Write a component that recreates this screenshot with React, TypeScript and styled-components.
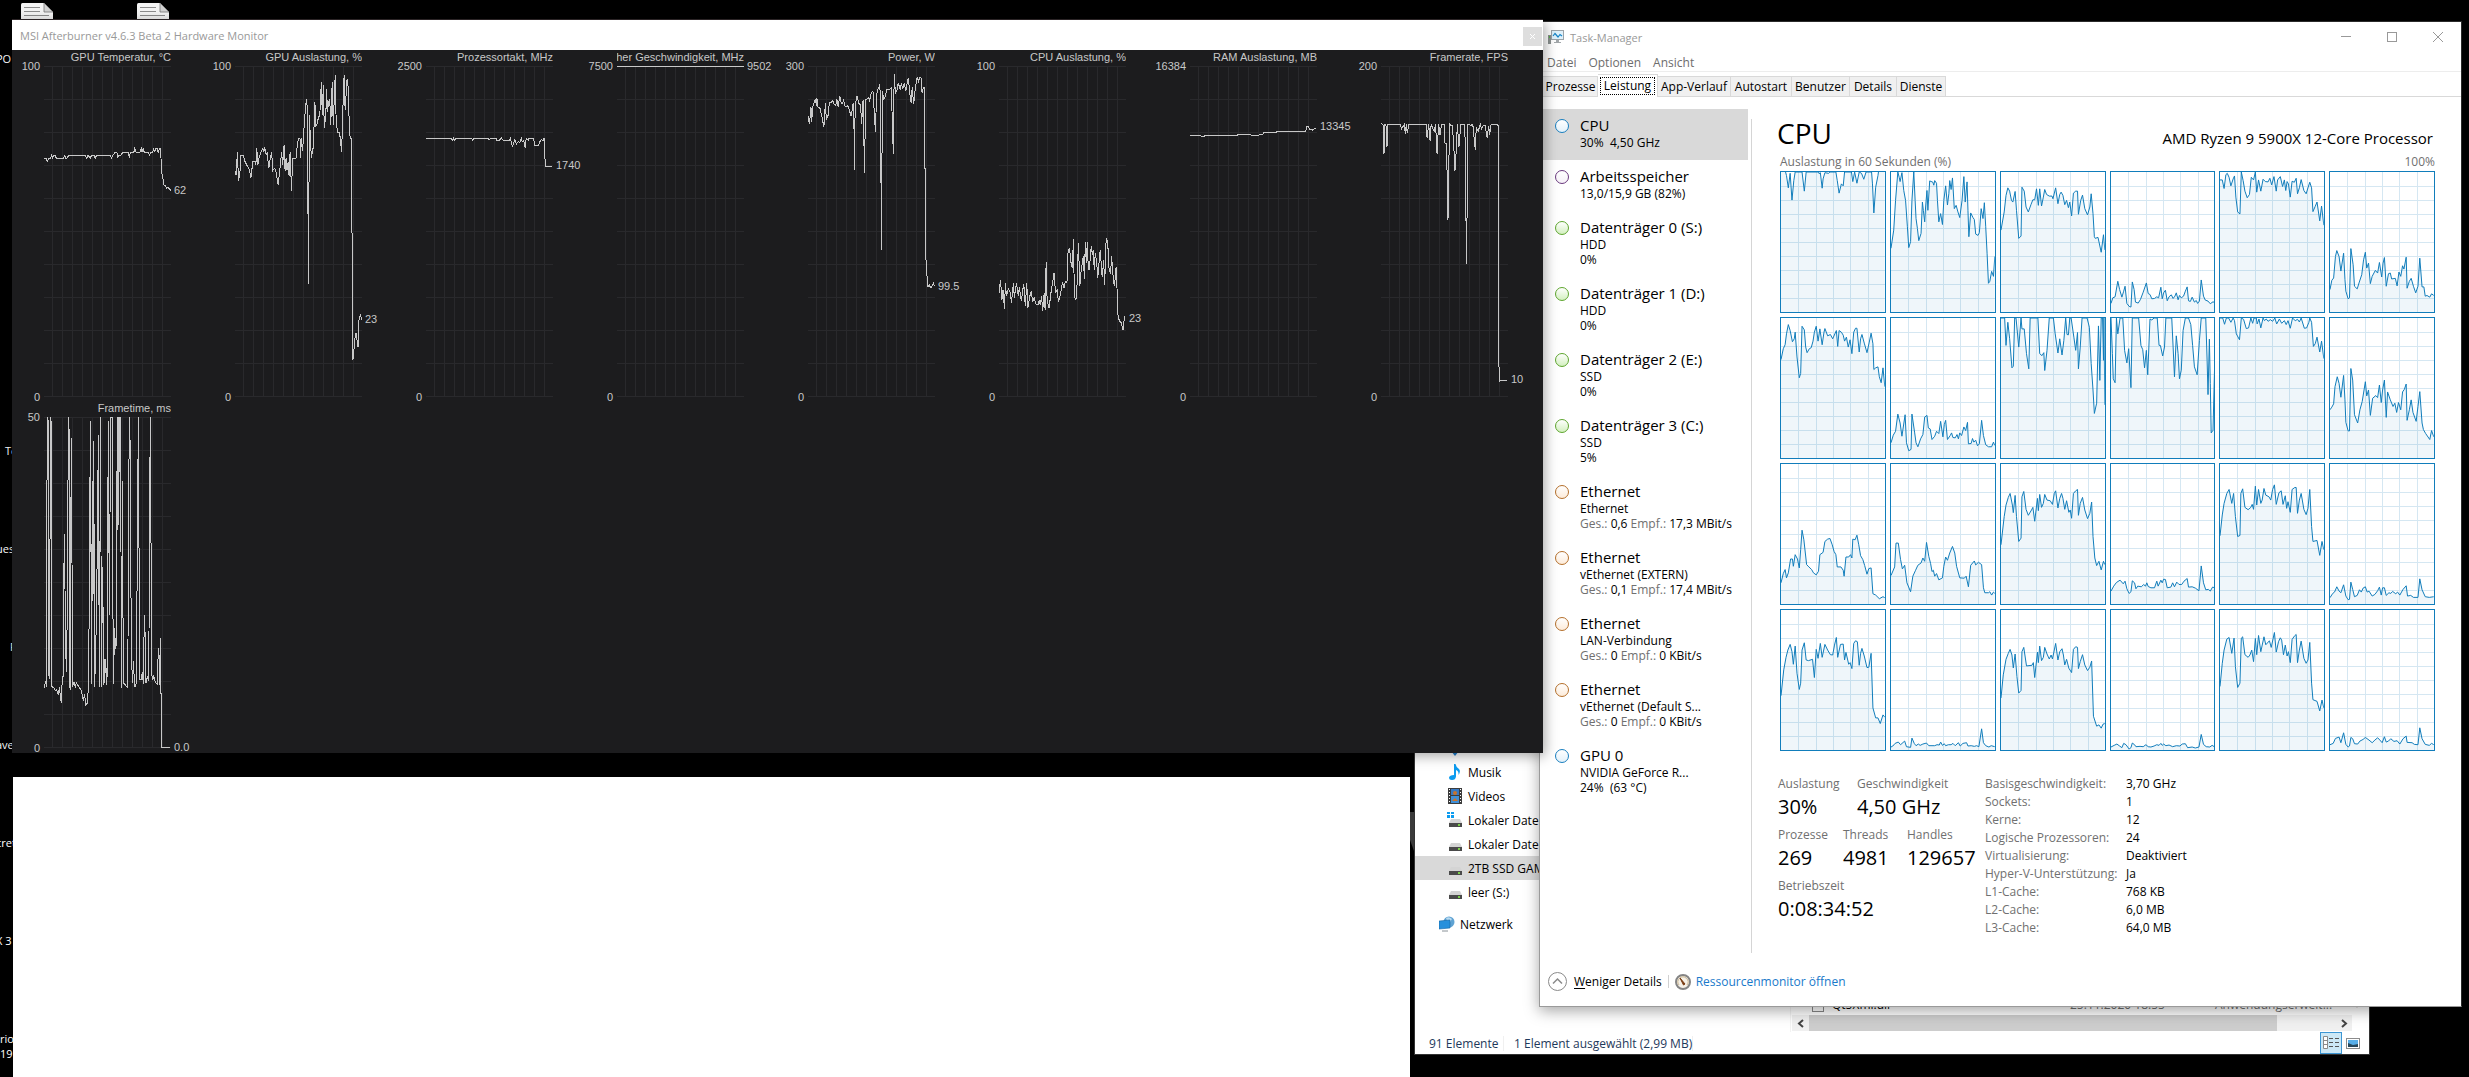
import React from "react";
import styled, { createGlobalStyle, css } from "styled-components";

const uiFont = `"Open Sans", "Noto Sans", sans-serif`;
const monitorFont = `"Liberation Sans", Arial, sans-serif`;

const GlobalStyle = createGlobalStyle`
  *, *::before, *::after { box-sizing: border-box; }
  html, body { margin: 0; background: #000; }
  body { font-family: ${uiFont}; font-size: 12px; line-height: 15px; color: #000; }
  button { font: inherit; color: inherit; border: 0; padding: 0; margin: 0; background: none; text-align: left; }
  svg { display: block; flex: none; }
`;

const Desktop = styled.main`
  position: relative;
  width: 100%;
  height: 100vh;
  overflow: hidden;
  background: #000;
`;

const DesktopIcon = styled.div<{ $left: number }>`
  position: absolute;
  top: 3px;
  left: ${(p) => p.$left}px;
`;

const DesktopLabel = styled.span<{ $top: number; $left?: number }>`
  position: absolute;
  top: ${(p) => p.$top}px;
  left: ${(p) => p.$left ?? 0}px;
  font-size: 11px;
  white-space: nowrap;
  color: #fff;
`;

const WallpaperShard = styled.svg`
  position: absolute;
  left: 1410px;
  top: 812px;
`;

/* ---------- hardware monitor ---------- */

const MonitorWindow = styled.section`
  position: absolute;
  z-index: 3;
  left: 12px;
  right: 926px;
  top: 19px;
  border-top: 1px solid #2b2426;
  background: #1c1c1e;
  box-shadow: 2px 3px 12px rgba(0, 0, 0, 0.35);
`;

const MonitorTitle = styled.header`
  display: flex;
  align-items: center;
  justify-content: space-between;
  height: 30px;
  padding: 0 1px 0 8px;
  background: #fff;
  font-size: 11px;
  color: #999;
`;

const MonitorClose = styled.button`
  display: flex;
  align-items: center;
  justify-content: center;
  width: 19px;
  height: 19px;
  margin-top: 3px;
  background: #dedede;
`;

const MonitorGrid = styled.div`
  display: grid;
  grid-template-columns: repeat(8, 1fr);
  padding: 0 3px 1px 0;
  font-family: ${monitorFont};
  font-size: 11px;
  line-height: 12px;
  color: #c8c8c8;
`;

const MonitorCell = styled.article`
  display: grid;
  grid-template-columns: 32px 1fr 32px;
  grid-template-rows: 16px 331px 4px;
`;

const MonitorName = styled.h3`
  grid-column: 2;
  display: flex;
  justify-content: flex-end;
  margin: 0;
  padding-top: 1px;
  overflow: hidden;
  white-space: nowrap;
  font: inherit;
`;

const Scale = styled.div`
  grid-column: 1;
  grid-row: 2;
  display: flex;
  flex-direction: column;
  justify-content: space-between;
  align-items: flex-end;
  margin: -6px 0;
  padding-right: 4px;
`;

const Plot = styled.div`
  grid-column: 2;
  grid-row: 2;
  background:
    linear-gradient(#29292c 1px, transparent 1px) 0 0 / 100% 33px,
    linear-gradient(90deg, #29292c 1px, transparent 1px) 8px 0 / 10px 100%;
  svg { overflow: visible; }
`;

const Reading = styled.output`
  grid-column: 3;
  grid-row: 2;
  margin-top: -6px;
  padding-left: 3px;
`;

type Series = { name: string; max: string; value: string; at: number; box: string; points: string };

const series: Series[] = [
  { name: "GPU Temperatur, °C", max: "100", value: "62", at: 124, box: "88 199 256 990",
    points: "88,476 92,476 95,485 98,476 101,476 103,467 105,475 107,467 110,467 113,476 127,476 130,467 132,475 134,475 138,467 171,467 174,476 177,467 181,476 184,467 189,467 191,476 194,467 221,467 224,475 227,467 231,458 235,458 236,475 238,467 243,467 247,458 258,458 260,475 262,458 269,458 271,446 274,458 281,458 284,446 286,458 288,446 290,458 298,458 301,467 303,458 307,458 309,446 311,458 313,446 316,446 318,458 321,446 323,446 325,515 328,540 330,556 332,557 335,566 338,564 340,567 344,572" },
  { name: "GPU Auslastung, %", max: "100", value: "23", at: 253, box: "472 199 256 990",
    points: "472,513 474,527 477,457 479,545 482,518 484,467 489,467 492,485 497,500 501,510 504,536 508,485 513,485 514,495 516,446 518,495 520,478 524,458 528,446 530,455 532,446 535,465 537,458 540,506 543,476 546,458 548,513 552,506 555,518 559,556 562,516 566,458 568,497 571,436 573,515 575,476 577,512 579,488 581,528 583,458 586,575 588,476 595,476 597,446 600,415 603,415 604,476 606,415 608,455 610,415 612,360 616,298 618,330 619,600 620,854 621,600 622,346 624,420 626,475 630,440 633,307 635,378 637,375 640,355 643,345 646,247 648,346 650,256 652,385 655,345 657,267 658,337 661,306 663,298 665,377 668,247 670,377 674,226 676,372 679,398 683,400 685,430 687,458 689,345 692,226 694,330 698,237 700,260 703,405 705,415 707,415 708,750 709,1082 711,1070 713,1020 716,1000 718,1022 720,1043 722,960 725,943 727,960" },
  { name: "Prozessortakt, MHz", max: "2500", value: "1740", at: 99, box: "856 199 256 990",
    points: "856,415 907,415 909,422 911,415 913,422 917,415 948,415 950,422 952,415 981,415 983,422 986,415 997,415 999,422 1004,422 1008,415 1012,422 1024,422 1026,415 1030,440 1033,430 1035,420 1038,433 1042,425 1045,428 1048,415 1050,427 1053,422 1056,445 1058,415 1062,422 1064,415 1070,415 1073,415 1075,438 1082,439 1086,425 1089,420 1092,422 1094,415 1095,458 1097,499 1110,499" },
  { name: "Speicher Geschwindigkeit, MHz", max: "7500", value: "9502", at: 0, box: "1240 199 256 990",
    points: "1240,200 1495,200" },
  { name: "Power, W", max: "300", value: "99.5", at: 220, box: "56 199 256 990",
    points: "56,350 59,374 62,323 63,368 66,320 71,298 73,320 74,295 76,322 80,325 84,350 88,383 91,310 93,360 97,345 99,308 102,310 106,302 108,312 112,318 114,298 117,322 120,288 123,310 126,310 128,302 131,322 136,318 139,330 143,350 147,310 149,400 150,510 151,310 154,300 155,288 158,310 162,316 164,374 167,300 170,521 172,300 178,295 180,303 184,278 187,275 188,300 192,398 194,290 196,272 200,258 202,280 203,510 204,752 205,510 206,275 209,300 212,288 215,270 222,268 224,262 226,370 228,462 229,300 230,222 232,280 235,275 238,250 242,270 244,250 247,268 250,250 253,275 258,235 262,290 264,311 266,262 269,314 272,270 276,232 279,245 282,232 284,235 286,280 289,262 290,262 291,505 293,505 293,758 296,830 298,862 300,855 304,866 309,850 311,860" },
  { name: "CPU Auslastung, %", max: "100", value: "23", at: 252, box: "440 199 256 990",
    points: "440,880 443,840 446,900 448,870 451,928 453,850 455,890 459,867 463,880 465,911 469,850 471,895 475,850 479,890 481,863 485,905 488,870 490,853 493,920 496,850 498,925 502,890 505,875 508,907 511,895 515,915 519,915 521,900 523,917 526,890 528,935 531,880 533,930 535,788 537,900 541,926 543,900 546,865 548,850 551,820 554,880 557,870 560,907 563,890 568,848 571,865 574,845 577,850 579,760 582,745 586,800 588,802 590,717 592,890 595,902 597,870 600,730 603,860 605,820 610,768 612,838 614,727 616,790 618,727 620,808 622,808 626,738 628,765 630,750 632,810 634,760 637,788 639,835 641,800 644,750 648,832 651,782 653,855 656,717 659,725 662,812 665,820 667,770 671,850 673,858 676,802 679,905 680,950 683,965 686,968 690,990 693,950" },
  { name: "RAM Auslastung, MB", max: "16384", value: "13345", at: 60, box: "824 199 256 990",
    points: "824,406 843,406 846,409 853,409 856,406 920,406 923,403 944,403 947,406 963,406 965,403 971,403 974,397 998,397 1000,394 1018,394 1020,397 1022,394 1057,394 1060,380 1062,379 1065,389 1068,388 1071,391 1077,385" },
  { name: "Framerate, FPS", max: "200", value: "10", at: 313, box: "1208 199 256 990",
    points: "1208,371 1212,374 1214,463 1216,374 1218,374 1220,443 1222,373 1247,373 1249,388 1255,375 1257,404 1259,373 1261,401 1264,373 1299,373 1301,416 1304,373 1307,425 1309,373 1312,385 1315,395 1318,373 1321,463 1324,373 1327,405 1330,373 1335,373 1337,430 1340,430 1342,580 1343,662 1344,580 1346,373 1350,378 1352,378 1355,448 1357,515 1359,470 1362,373 1365,443 1369,373 1377,373 1379,595 1380,792 1382,595 1383,375 1390,377 1393,373 1398,450 1400,385 1404,395 1408,373 1411,388 1414,377 1418,378 1422,416 1425,378 1427,406 1429,378 1432,373 1442,373 1444,378 1445,765 1446,1148 1446,1141 1461,1141" },
  { name: "Frametime, ms", max: "50", value: "0.0", at: 330, box: "132 63 381 753",
    points: "132,682 137,665 139,680 140,370 142,63 144,63 146,355 146,655 148,362 149,660 151,63 153,63 155,370 155,678 163,682 166,688 170,685 175,697 178,680 184,716 187,655 190,655 191,470 193,330 195,455 197,600 200,645 203,370 205,63 207,63 208,680 211,683 212,397 214,110 216,395 218,678 222,668 226,680 229,670 238,680 244,688 250,710 254,695 257,720 263,715 266,655 269,345 271,72 273,372 274,672 277,210 279,483 280,117 283,397 284,678 287,600 290,485 293,275 295,105 296,392 299,678 301,63 303,370 305,678 307,405 310,540 312,675 313,615 315,648 317,615 320,675 322,640 323,340 325,73 328,515 330,288 332,63 337,63 338,366 340,672 343,545 344,605 347,567 349,585 350,322 352,63 354,320 356,63 358,188 359,63 361,63 363,372 365,682 367,208 368,442 371,670 382,680 384,575 386,267 388,63 391,140 392,397 395,625 398,670 400,620 404,680 409,670 412,363 415,63 417,363 419,662 424,662 427,645 430,672 431,593 434,515 436,587 438,670 442,655 445,665 447,557 449,258 451,63 453,350 455,648 458,663 461,655 467,670 472,672 473,630 476,590 478,620 479,675 481,568 482,693 484,693 485,816 510,816" },
];

function MonitorChart({ s }: { s: Series }) {
  return (
    <MonitorCell>
      <MonitorName>{s.name}</MonitorName>
      <Scale><span>{s.max}</span><span>0</span></Scale>
      <Plot>
        <svg width="100%" height="330" viewBox={s.box} preserveAspectRatio="none">
          <polyline points={s.points} fill="none" stroke="#c8c8c8" strokeWidth="1" vectorEffect="non-scaling-stroke" shapeRendering="crispEdges" />
        </svg>
      </Plot>
      <Reading style={{ paddingTop: s.at }}>{s.value}</Reading>
    </MonitorCell>
  );
}

/* ---------- document window ---------- */

const BlankWindow = styled.section`
  position: absolute;
  z-index: 1;
  left: 13px;
  right: 1059px;
  top: 777px;
  bottom: 0;
  background: #fff;
`;

/* ---------- file explorer ---------- */

const ExplorerWindow = styled.section`
  position: absolute;
  z-index: 1;
  left: 1414px;
  right: 99px;
  top: 741px;
  display: flex;
  flex-direction: column;
  border: 1px solid #333;
  background: #fff;
`;

const ExplorerBody = styled.div`
  display: grid;
  grid-template-columns: 376px 1fr;
  height: 290px;
`;

const Tree = styled.nav`
  border-right: 1px solid #f3f3f3;
  padding-top: 18px;
`;

const TreeItem = styled.button<{ $selected?: boolean; $root?: boolean }>`
  display: flex;
  align-items: center;
  gap: ${(p) => (p.$root ? 5 : 4)}px;
  width: 100%;
  height: 24px;
  margin-top: ${(p) => (p.$root ? 8 : 0)}px;
  padding-left: ${(p) => (p.$root ? 24 : 32)}px;
  background: ${(p) => (p.$selected ? "#d9d9d9" : "transparent")};
  white-space: nowrap;
`;

const DownloadRow = styled.div`
  position: absolute;
  left: 33px;
  top: 0;
`;

const FilePane = styled.div`
  display: flex;
  flex-direction: column;
  justify-content: flex-end;
  padding: 0 0 1px 1px;
`;

const FileRow = styled.div`
  display: grid;
  grid-template-columns: 20px 238px 145px 1fr 16px;
  align-items: center;
  padding-left: 20px;
  height: 21px;
  color: #6d6d6d;
`;

const FileName = styled.span`
  color: #000;
`;

const ScrollBar = styled.div`
  display: grid;
  grid-template-columns: 17px 468px 1fr 17px;
  align-items: stretch;
  height: 16px;
  margin-right: 17px;
  background: #f0f0f0;
`;

const ScrollThumb = styled.div`
  background: #cdcdcd;
`;

const ScrollArrow = styled.button`
  display: flex;
  align-items: center;
  justify-content: center;
`;

const Filler = styled.div``;

const StatusBar = styled.footer`
  display: flex;
  align-items: center;
  height: 22px;
  padding: 0 5px 0 14px;
  color: #1e395b;
`;

const StatusText = styled.span<{ $width: number }>`
  width: ${(p) => p.$width}px;
  border-right: 1px solid #f0f0f0;
  margin-right: 10px;
  white-space: nowrap;
`;

const ViewButton = styled.button<{ $active?: boolean }>`
  display: flex;
  align-items: center;
  justify-content: center;
  width: 22px;
  height: 22px;
  border: 1px solid ${(p) => (p.$active ? "#3c96d4" : "transparent")};
  background: ${(p) => (p.$active ? "#cce8f6" : "transparent")};
`;

const Spacer = styled.div`
  flex: 1;
`;

/* ---------- task manager ---------- */

const TaskWindow = styled.section`
  position: absolute;
  z-index: 2;
  left: 1539px;
  right: 7px;
  top: 21px;
  border: 1px solid #9a9a9a;
  border-top-color: #2b2b2b;
  border-right-color: #2b2b2b;
  background: #fff;
  box-shadow: 0 4px 14px rgba(0, 0, 0, 0.35);
`;

const TitleBar = styled.header`
  display: flex;
  align-items: center;
  gap: 6px;
  height: 30px;
  padding: 0 1px 0 8px;
  font-size: 11px;
  color: #999;
`;

const CaptionButton = styled.button`
  display: flex;
  align-items: center;
  justify-content: center;
  width: 45px;
  height: 30px;
  margin-left: -5px;
`;

const MenuBar = styled.nav`
  display: flex;
  gap: 12px;
  height: 20px;
  padding: 2px 0 0 7px;
  border-bottom: 1px solid #ededed;
  color: #6d6d6d;
`;

const TabStrip = styled.div`
  display: flex;
  align-items: flex-end;
  height: 25px;
  border-bottom: 1px solid #d9d9d9;
`;

const Tab = styled.button<{ $active?: boolean; $width: number }>`
  display: flex;
  align-items: center;
  justify-content: center;
  width: ${(p) => p.$width}px;
  height: 20px;
  border: 1px solid #d9d9d9;
  border-left: 0;
  border-bottom: 0;
  background: #f0f0f0;
  &:first-child { padding-left: 4px; }
  ${(p) =>
    p.$active &&
    css`
      height: 23px;
      margin-bottom: -1px;
      background: #fff;
    `}
`;

const FocusFrame = styled.span`
  padding: 0 3px 1px;
  border: 1px dotted #000;
`;

const TaskBody = styled.div`
  display: grid;
  grid-template-columns: 211px 1fr;
  height: 860px;
`;

const Sidebar = styled.nav`
  padding: 12px 3px 0 0;
`;

const Resource = styled.button<{ $selected?: boolean }>`
  display: grid;
  grid-template-columns: 18px 1fr;
  column-gap: 7px;
  width: 100%;
  padding: 6px 0 10px 15px;
  background: ${(p) => (p.$selected ? "#d9d9d9" : "transparent")};
`;

const tones = {
  blue: ["#1a7fbf", "#e3f1fa"],
  purple: ["#6b3a7e", "#f6f1f8"],
  green: ["#5ea62f", "#d3f0bf"],
  orange: ["#b5702c", "#fdebd9"],
} as const;
type Tone = keyof typeof tones;

const Dot = styled.span<{ $tone: Tone }>`
  width: 14px;
  height: 14px;
  margin-top: 4px;
  border: 1px solid ${(p) => tones[p.$tone][0]};
  border-radius: 50%;
  background: linear-gradient(#fff, ${(p) => tones[p.$tone][1]});
`;

const ResourceText = styled.span`
  display: flex;
  flex-direction: column;
  white-space: nowrap;
`;

const ResourceName = styled.span`
  font-size: 15px;
  line-height: 20px;
`;

const Muted = styled.span`
  color: #707070;
`;

const Performance = styled.div`
  position: relative;
  padding: 17px 26px 0 26px;
  &::before {
    content: "";
    position: absolute;
    left: 0;
    top: 22px;
    bottom: 4px;
    border-left: 1px solid #d5d5d5;
  }
`;

const Heading = styled.div`
  display: flex;
  align-items: baseline;
  justify-content: space-between;
  height: 39px;
  padding-right: 2px;
`;

const Title = styled.h1`
  margin: 0;
  font-size: 28px;
  font-weight: 400;
  line-height: 38px;
`;

const Model = styled.span`
  font-size: 15px;
`;

const GraphLabels = styled.div`
  display: flex;
  justify-content: space-between;
  padding-left: 3px;
  line-height: 18px;
  color: #707070;
`;

const Cores = styled.div`
  display: grid;
  grid-template-columns: repeat(6, 1fr);
  grid-auto-rows: 142px;
  gap: 4px;
  padding-left: 3px;
`;

const Core = styled.div`
  border: 1px solid #117dbb;
  overflow: hidden;
`;

const Stats = styled.div`
  display: grid;
  grid-template-columns: 207px 1fr;
  padding: 24px 0 0 1px;
`;

const StatRows = styled.div`
  display: flex;
  flex-direction: column;
  gap: 5px;
`;

const StatRow = styled.div`
  display: flex;
`;

const Stat = styled.div<{ $width?: number }>`
  display: flex;
  flex-direction: column;
  width: ${(p) => (p.$width ? `${p.$width}px` : "auto")};
  line-height: 18px;
  white-space: nowrap;
`;

const StatValue = styled.span`
  font-size: 20px;
  line-height: 28px;
`;

const Facts = styled.table`
  border-collapse: collapse;
  align-self: start;
  justify-self: start;
  line-height: 18px;
  th, td { padding: 0; text-align: left; font-weight: 400; white-space: nowrap; }
  th { width: 141px; color: #707070; }
`;

const TaskFooter = styled.footer`
  display: flex;
  align-items: center;
  height: 49px;
  padding-left: 8px;
`;

const LessButton = styled.button`
  display: flex;
  align-items: center;
  gap: 7px;
  padding-right: 6px;
  u { text-underline-offset: 2px; }
`;

const MonitorLink = styled.a`
  display: flex;
  align-items: center;
  gap: 5px;
  padding-left: 6px;
  color: #1979ca;
  text-decoration: none;
`;

const Divider = styled.span`
  width: 1px;
  height: 13px;
  background: #d0d0d0;
`;

const cores: { box: string; points: string }[] = [
  { box: "66 214 227 424", points: "66,190 76,214 78,225 82,262 86,218 90,299 94,240 97,214 112,214 117,272 121,214 148,214 150,220 152,216 156,263 158,235 162,216 170,218 173,214 186,214 189,240 193,278 198,250 202,256 205,214 220,214 223,243 227,214 232,248 237,214 242,218 247,236 252,214 264,214 266,250 269,338 273,260 278,225 280,205 293,205" },
  { box: "304 214 228 424", points: "304,445 310,390 314,300 319,214 322,230 324,243 328,216 332,270 336,300 340,380 343,443 347,425 350,300 354,214 357,300 359,355 362,385 365,422 370,400 373,305 375,330 378,365 380,320 383,270 385,330 389,241 396,245 398,254 400,240 404,248 406,300 409,365 413,340 417,373 420,300 424,256 428,314 431,280 433,240 436,267 439,232 443,325 447,315 451,335 455,352 460,300 464,228 467,305 471,244 473,330 475,410 479,338 484,352 487,358 490,402 495,406 498,398 502,325 506,355 509,307 512,380 515,460 518,551 521,545 525,515 529,530 532,470" },
  { box: "544 214 228 424", points: "544,390 551,335 555,285 559,262 563,272 567,300 570,305 575,273 578,330 583,415 588,408 590,260 595,272 599,320 604,335 610,312 614,298 618,298 622,265 626,315 629,265 633,317 637,290 640,267 644,282 650,287 656,287 658,295 664,262 669,310 673,282 676,275 680,285 684,313 688,300 692,322 695,305 699,347 703,278 708,272 712,272 714,342 719,300 723,284 728,325 734,344 739,320 742,280 746,340 749,410 751,415 757,412 764,457 769,404 772,450" },
  { box: "784 214 229 424", points: "784,612 788,595 793,592 799,545 803,570 808,593 812,575 815,560 819,612 824,621 828,623 831,547 835,570 838,608 844,611 849,600 855,578 862,550 866,582 870,585 874,598 880,597 885,592 889,595 894,563 897,598 900,580 904,572 908,604 912,592 917,586 921,597 925,590 928,580 932,601 935,588 939,595 944,590 948,575 952,562 955,604 959,606 963,593 968,608 972,603 975,612 979,605 983,541 988,590 992,602 998,605 1003,613 1009,607 1013,610" },
  { box: "1024 214 229 424", points: "1024,238 1029,238 1033,264 1037,222 1040,218 1044,230 1048,256 1053,235 1056,226 1059,290 1063,335 1068,341 1071,214 1075,240 1079,272 1084,292 1089,282 1093,230 1098,238 1102,214 1105,275 1109,238 1114,272 1119,236 1124,243 1130,244 1134,233 1138,253 1143,228 1148,272 1151,238 1157,228 1162,258 1166,238 1169,270 1172,243 1175,250 1179,290 1183,242 1188,245 1192,233 1195,280 1199,262 1203,237 1209,270 1214,280 1218,262 1222,245 1226,262 1229,334 1234,318 1238,305 1244,362 1248,317 1253,375" },
  { box: "1264 214 229 424", points: "1264,570 1268,542 1272,535 1276,470 1279,452 1284,470 1288,514 1294,460 1297,540 1299,575 1304,598 1307,595 1310,446 1315,495 1318,560 1324,568 1328,550 1334,525 1338,480 1342,457 1345,505 1349,490 1353,552 1357,530 1364,512 1369,520 1373,488 1378,532 1381,490 1384,473 1388,560 1393,522 1397,520 1400,538 1408,536 1412,559 1416,517 1420,530 1424,498 1427,508 1432,472 1434,566 1439,545 1443,536 1448,560 1453,580 1458,560 1462,475 1467,562 1471,562 1474,590 1478,588 1484,593 1488,583 1493,588" },
  { box: "66 652 227 424", points: "66,778 71,745 75,733 78,700 82,672 86,690 91,724 95,715 97,695 101,770 106,833 109,820 112,677 117,688 120,740 123,757 128,745 132,742 136,722 139,695 143,677 147,722 151,685 156,733 160,695 162,684 168,706 174,702 179,715 187,690 190,738 193,690 198,695 202,704 205,722 209,710 213,740 217,718 221,760 225,695 229,683 232,683 237,755 240,715 243,702 248,728 254,757 259,725 263,698 267,730 269,808 273,803 278,800 281,830 285,848 289,803 293,860" },
  { box: "304 652 228 424", points: "304,1030 309,1007 314,995 319,943 324,970 328,1010 335,945 338,1030 343,1054 348,1050 350,943 356,1000 359,1030 363,1042 369,1018 374,1005 378,952 383,947 386,985 390,988 394,1020 400,1010 404,995 409,1002 413,965 418,1012 421,975 424,962 428,1020 434,1008 437,1000 440,1014 445,1015 449,1005 452,1018 455,1000 459,1008 464,982 468,993 472,968 474,1033 480,1032 483,1017 486,1028 490,1022 494,1039 498,1033 503,962 507,1008 512,1036 518,1042 525,1042 529,1028 532,1038" },
  { box: "544 652 228 424", points: "544,652 552,652 555,735 559,665 563,715 568,803 571,798 574,652 577,652 583,740 588,652 590,685 595,685 600,760 605,806 608,652 625,652 629,760 634,766 638,757 640,811 645,750 650,652 659,652 663,700 669,758 673,715 678,764 682,720 686,652 689,702 692,703 695,652 698,652 704,710 708,750 712,696 714,806 718,740 722,652 733,652 738,680 742,790 746,870 749,941 754,910 758,676 761,841 764,652 767,652 769,780 770,652 772,915" },
  { box: "784 652 229 424", points: "784,652 787,760 789,836 793,848 796,652 799,700 804,652 810,652 814,750 819,788 823,745 828,863 831,652 845,652 850,735 854,748 858,803 862,750 865,824 870,655 874,658 879,652 886,652 890,735 893,735 898,767 902,740 905,652 918,652 921,740 924,830 928,706 932,760 935,836 939,810 943,690 948,652 955,652 960,672 964,735 968,800 974,824 979,720 983,652 993,652 996,780 998,884 1001,716 1003,850 1005,1000 1009,992 1013,770" },
  { box: "1024 652 229 424", points: "1024,652 1030,652 1034,671 1038,652 1043,652 1048,665 1053,652 1056,660 1060,700 1067,718 1071,652 1076,656 1082,684 1087,682 1092,652 1096,668 1099,652 1104,652 1106,670 1110,655 1114,682 1119,652 1122,660 1126,655 1130,662 1135,657 1140,662 1145,652 1149,670 1155,655 1160,668 1166,660 1170,672 1174,660 1179,683 1184,652 1190,660 1195,656 1199,664 1203,652 1210,683 1215,682 1220,665 1222,652 1226,665 1230,738 1234,730 1238,710 1244,755 1248,722 1253,775" },
  { box: "1264 652 229 424", points: "1264,930 1268,922 1272,912 1275,860 1280,830 1284,850 1288,892 1294,826 1297,900 1299,968 1304,994 1307,994 1310,805 1314,840 1318,945 1325,970 1330,930 1335,905 1342,845 1345,888 1349,870 1353,947 1358,895 1365,887 1369,893 1373,855 1377,908 1380,870 1384,840 1388,953 1391,876 1397,900 1403,920 1407,910 1411,938 1415,908 1420,930 1424,876 1428,868 1432,852 1434,962 1439,930 1443,900 1447,938 1454,965 1458,920 1462,875 1467,970 1470,990 1475,1002 1484,1020 1488,993 1493,1012" },
  { box: "66 41 227 423", points: "66,400 71,372 75,360 78,385 82,370 87,328 91,328 93,350 97,315 102,328 106,355 109,300 112,241 116,270 122,345 127,352 133,360 137,370 143,376 148,365 151,315 158,308 162,275 168,268 173,266 178,285 182,305 186,315 189,352 197,352 202,362 204,380 208,322 214,322 218,315 221,325 223,268 228,270 232,256 236,285 240,318 245,330 249,348 254,374 258,357 263,355 267,433 273,437 281,448 289,442 293,445" },
  { box: "304 41 228 423", points: "304,378 312,352 315,280 320,280 325,330 329,358 334,347 339,400 347,427 352,380 358,362 363,347 370,340 374,325 378,335 382,278 387,320 391,342 394,366 397,362 400,380 404,372 409,391 417,385 420,350 424,322 428,332 433,310 439,290 444,310 448,350 455,385 465,386 469,380 474,412 479,347 487,334 490,346 496,338 503,345 507,415 510,430 518,430 521,427 525,437 529,428 532,432" },
  { box: "544 41 228 423", points: "544,285 551,200 555,165 560,142 564,130 569,165 571,188 575,136 578,200 583,275 588,265 590,140 594,124 599,178 604,196 611,180 614,172 618,214 624,145 626,182 629,133 633,172 637,160 640,133 645,150 652,152 657,163 661,130 664,122 669,174 673,145 677,130 680,145 684,178 688,152 693,187 696,180 699,205 703,130 708,122 712,118 714,196 718,160 723,142 728,180 734,206 739,190 743,156 746,260 750,325 754,348 759,335 764,361 769,335 772,345" },
  { box: "784 41 229 423", points: "784,425 790,410 796,399 804,392 811,403 815,395 819,418 824,432 828,427 831,394 836,400 839,418 843,410 851,412 856,405 860,410 863,400 866,411 872,415 880,415 885,395 888,410 894,392 897,400 900,389 904,390 908,415 916,413 920,400 924,412 929,398 934,405 940,405 945,395 952,387 955,413 963,412 970,416 978,424 983,349 988,400 993,421 999,420 1003,425 1008,413 1013,415" },
  { box: "1024 41 229 423", points: "1024,258 1029,195 1033,160 1039,130 1044,118 1050,160 1054,130 1058,200 1063,260 1068,257 1070,130 1074,116 1079,172 1086,179 1092,172 1095,163 1098,178 1102,108 1105,165 1109,118 1114,160 1117,150 1121,115 1125,135 1132,140 1136,150 1140,118 1144,104 1148,163 1154,128 1159,122 1163,163 1168,137 1171,175 1174,155 1179,187 1183,118 1189,112 1192,112 1195,190 1199,150 1203,130 1209,178 1214,194 1218,175 1222,118 1226,230 1229,275 1238,272 1244,317 1249,275 1253,300" },
  { box: "1264 41 229 423", points: "1264,445 1270,432 1274,428 1279,412 1284,425 1288,430 1294,406 1299,440 1304,451 1307,450 1310,398 1314,420 1318,442 1324,438 1329,421 1333,428 1337,416 1342,412 1346,428 1350,425 1357,440 1363,435 1369,424 1373,413 1377,437 1380,415 1384,415 1388,438 1394,430 1398,432 1402,426 1409,433 1413,428 1418,437 1425,420 1432,409 1435,440 1442,438 1448,444 1458,444 1462,388 1467,421 1474,442 1483,444 1493,442" },
  { box: "66 479 227 423", points: "66,738 72,660 77,622 81,600 86,583 90,605 93,643 97,588 101,670 106,719 109,700 112,600 117,578 121,630 126,632 135,628 139,683 143,598 147,625 152,580 156,622 162,583 168,600 174,614 179,615 183,585 187,562 190,622 196,583 202,582 205,630 208,607 214,643 217,638 221,656 225,580 229,572 233,575 237,646 240,610 243,595 248,618 254,653 258,652 263,610 267,775 273,805 278,805 283,822 289,796 293,803" },
  { box: "304 479 228 423", points: "304,893 308,890 313,882 320,878 325,886 334,875 338,892 347,894 350,866 355,882 359,889 364,884 368,888 374,884 382,881 387,889 400,889 405,886 410,887 413,878 417,888 421,883 424,889 430,886 436,886 440,882 445,889 452,880 456,890 462,882 470,880 473,890 480,889 487,891 492,889 497,892 503,838 507,880 512,889 519,893 524,889 532,892" },
  { box: "544 479 228 423", points: "544,745 549,675 555,628 560,610 564,598 568,615 571,654 575,612 579,680 583,730 588,722 590,605 594,592 600,648 612,646 615,638 618,683 624,606 626,638 629,588 633,632 637,622 640,592 645,612 650,627 654,615 657,627 664,580 669,630 673,605 678,596 681,615 684,645 688,628 693,655 699,668 703,598 708,590 712,592 714,656 718,635 723,614 728,645 734,662 739,652 743,633 747,800 754,830 759,826 764,836 768,824 772,822" },
  { box: "784 479 229 423", points: "784,893 791,888 797,884 803,890 808,895 812,882 817,886 824,899 828,895 831,881 836,886 839,892 848,891 855,892 861,886 866,892 872,893 879,890 885,886 890,888 894,882 897,888 900,884 905,889 912,887 920,892 928,889 936,890 941,884 948,883 953,895 963,893 970,896 978,893 983,855 988,885 994,892 1002,893 1007,888 1013,893" },
  { box: "1024 479 229 423", points: "1024,710 1029,640 1033,600 1039,567 1044,562 1050,610 1055,564 1058,650 1063,713 1068,700 1071,564 1074,560 1079,614 1086,622 1090,615 1094,600 1098,635 1102,565 1105,614 1109,556 1114,605 1121,560 1125,584 1133,572 1137,592 1144,547 1148,606 1153,575 1157,563 1160,570 1164,614 1168,585 1172,618 1175,605 1179,638 1183,568 1188,558 1192,553 1195,638 1199,600 1203,573 1209,625 1214,640 1218,630 1222,577 1226,700 1229,750 1238,755 1244,784 1249,751 1253,775" },
  { box: "1264 479 229 423", points: "1264,886 1271,882 1276,867 1284,863 1288,880 1294,850 1299,885 1304,893 1307,890 1310,864 1314,868 1318,883 1325,884 1330,875 1337,870 1342,864 1350,872 1357,880 1363,872 1369,865 1374,872 1379,880 1384,862 1388,878 1393,875 1398,868 1405,876 1412,874 1418,884 1425,868 1432,860 1434,879 1445,880 1450,885 1458,886 1462,835 1467,868 1474,885 1483,888 1488,882 1493,886" },
];

const gridRows = [10, 20, 30, 40, 50, 60, 70, 80, 90];
const gridColumns = [17, 34, 51, 67, 84];

function CoreGraph({ box, points }: { box: string; points: string }) {
  const [x, y, w, h] = box.split(" ").map(Number);
  return (
    <Core>
      <svg width="100%" height="100%">
        <g stroke="#d5e7f2" shapeRendering="crispEdges">
          {gridRows.map((r) => <line key={`r${r}`} x1="0" x2="100%" y1={`${r}%`} y2={`${r}%`} />)}
          {gridColumns.map((c) => <line key={`c${c}`} y1="0" y2="100%" x1={`${c}%`} x2={`${c}%`} />)}
        </g>
        <svg width="100%" height="100%" viewBox={box} preserveAspectRatio="none">
          <polygon points={`${x},${y + h} ${points} ${x + w},${y + h}`} fill="#117dbb" fillOpacity="0.065" />
          <polyline points={points} fill="none" stroke="#117dbb" strokeWidth="1" vectorEffect="non-scaling-stroke" />
        </svg>
      </svg>
    </Core>
  );
}

type ResourceInfo = { name: string; tone: Tone; lines: React.ReactNode[]; selected?: boolean };

const traffic = (sent: string, received: string) => (
  <><Muted>Ges.:</Muted> {sent} <Muted>Empf.:</Muted> {received}</>
);

const resources: ResourceInfo[] = [
  { name: "CPU", tone: "blue", lines: [<>30%&nbsp; 4,50 GHz</>], selected: true },
  { name: "Arbeitsspeicher", tone: "purple", lines: ["13,0/15,9 GB (82%)"] },
  { name: "Datenträger 0 (S:)", tone: "green", lines: ["HDD", "0%"] },
  { name: "Datenträger 1 (D:)", tone: "green", lines: ["HDD", "0%"] },
  { name: "Datenträger 2 (E:)", tone: "green", lines: ["SSD", "0%"] },
  { name: "Datenträger 3 (C:)", tone: "green", lines: ["SSD", "5%"] },
  { name: "Ethernet", tone: "orange", lines: ["Ethernet", traffic("0,6", "17,3 MBit/s")] },
  { name: "Ethernet", tone: "orange", lines: ["vEthernet (EXTERN)", traffic("0,1", "17,4 MBit/s")] },
  { name: "Ethernet", tone: "orange", lines: ["LAN-Verbindung", traffic("0", "0 KBit/s")] },
  { name: "Ethernet", tone: "orange", lines: ["vEthernet (Default S...", traffic("0", "0 KBit/s")] },
  { name: "GPU 0", tone: "blue", lines: ["NVIDIA GeForce R...", <>24%&nbsp; (63 °C)</>] },
];

const tabs = [
  { label: "Prozesse", width: 58 },
  { label: "Leistung", width: 60, active: true },
  { label: "App-Verlauf", width: 73 },
  { label: "Autostart", width: 61 },
  { label: "Benutzer", width: 58 },
  { label: "Details", width: 47 },
  { label: "Dienste", width: 49 },
];

const facts = [
  ["Basisgeschwindigkeit:", "3,70 GHz"],
  ["Sockets:", "1"],
  ["Kerne:", "12"],
  ["Logische Prozessoren:", "24"],
  ["Virtualisierung:", "Deaktiviert"],
  ["Hyper-V-Unterstützung:", "Ja"],
  ["L1-Cache:", "768 KB"],
  ["L2-Cache:", "6,0 MB"],
  ["L3-Cache:", "64,0 MB"],
];

/* ---------- icons ---------- */

const PageIcon = () => (
  <svg width="34" height="17" viewBox="0 0 34 17">
    <path d="M0 17V1.500Q0 0 1.500 0H23L32 9V17Z" fill="#f4f4f4" />
    <path d="M23 0V9H32Z" fill="#d2d2d2" stroke="#777" strokeWidth="0.800" />
    <path d="M3 4.500H19M3 8.500H19M3 12.500H28" stroke="#8d8d8d" />
    <path d="M0 16.500H34" stroke="#8a3d1a" />
  </svg>
);

const TaskIcon = () => (
  <svg width="16" height="15" viewBox="0 0 16 15">
    <rect x="0" y="5" width="3" height="9" fill="#8b9190" />
    <rect x="1" y="6" width="1" height="2" fill="#58b04b" />
    <rect x="3.500" y="0.500" width="12" height="9" fill="#dff1fb" stroke="#9ca3a8" />
    <path d="M5 6L7 3.500L10 7L12 4.500L14 6" fill="none" stroke="#1684c7" strokeWidth="1.200" />
    <path d="M8 10H11V12H13V13H6V12H8Z" fill="#a2a7aa" />
  </svg>
);

const MusicIcon = () => (
  <svg width="17" height="18" viewBox="0 0 17 18">
    <path d="M7 1H8.500Q9 4 12 6Q14 8 11.500 12Q12 8 9 7V13.500Q8.500 17 5 17Q2 17 2 14.500Q2.500 12 7 12Z" fill="#0c9cf0" />
  </svg>
);

const VideoIcon = () => (
  <svg width="17" height="16" viewBox="0 0 17 16">
    <rect x="1" y="0" width="14" height="16" fill="#3c3c3c" />
    <rect x="4" y="1" width="8" height="6" fill="#3679c4" />
    <rect x="4" y="8" width="8" height="7" fill="#3f8fd8" />
    <circle cx="8" cy="5" r="2" fill="#c9742c" />
    <path d="M5 13L8 10L11 13Z" fill="#c9742c" />
    <path d="M2.500 1V16M13.500 1V16" stroke="#fff" strokeDasharray="1 2" />
  </svg>
);

const DriveIcon = ({ system }: { system?: boolean }) => (
  <svg width="17" height="16" viewBox="0 0 17 16">
    {system && <path d="M0 0H3V2H0ZM4 0H7V2H4ZM0 3H3V6H0ZM4 3H7V6H4Z" fill="#0c9cf0" />}
    <path d="M4 7H13L15 11H2Z" fill="#d4d4d4" />
    <rect x="2" y="11" width="13" height="4" fill="#4a4a4a" />
    <rect x="11" y="12" width="2" height="2" fill="#7bd04a" />
  </svg>
);

const NetworkIcon = () => (
  <svg width="16" height="16" viewBox="0 0 16 16">
    <circle cx="10" cy="6" r="5.500" fill="#5fa3d3" />
    <path d="M7 2Q10 0 13 3L11 6L8 5Z" fill="#b8daf0" />
    <path d="M0 5L11 4V12L0 13Z" fill="#2690dc" stroke="#1566a5" strokeWidth="0.600" />
    <path d="M3 15H9" stroke="#8a9298" />
  </svg>
);

const Chevron = ({ d }: { d: string }) => (
  <svg width="8" height="9" viewBox="0 0 8 9"><path d={d} fill="none" stroke="#444" strokeWidth="2" /></svg>
);

export default function App() {
  return (
    <>
      <GlobalStyle />
      <Desktop>
        <DesktopIcon $left={21}><PageIcon /></DesktopIcon>
        <DesktopIcon $left={137}><PageIcon /></DesktopIcon>
        <DesktopLabel $top={51} $left={-4}>PO</DesktopLabel>
        <DesktopLabel $top={443} $left={5}>Te</DesktopLabel>
        <DesktopLabel $top={541} $left={-4}>ues</DesktopLabel>
        <DesktopLabel $top={639} $left={10}>P</DesktopLabel>
        <DesktopLabel $top={737} $left={-4}>ave</DesktopLabel>
        <DesktopLabel $top={835} $left={-4}>cret</DesktopLabel>
        <DesktopLabel $top={933} $left={-4}>X 3</DesktopLabel>
        <DesktopLabel $top={1031}>rio</DesktopLabel>
        <DesktopLabel $top={1046}>19</DesktopLabel>
        <WallpaperShard width="4" height="39" viewBox="0 0 4 39"><path d="M0 0H4V39L0 28Z" fill="#3a3a3a" /></WallpaperShard>

        <BlankWindow />

        <ExplorerWindow>
          <ExplorerBody>
            <Tree>
              <DownloadRow>
                <svg width="15" height="15" viewBox="0 0 15 15"><path d="M3 9H11L7 14Z" fill="#1e7fd0" /></svg>
              </DownloadRow>
              <TreeItem><MusicIcon />Musik</TreeItem>
              <TreeItem><VideoIcon />Videos</TreeItem>
              <TreeItem><DriveIcon system />Lokaler Datenträger (C:)</TreeItem>
              <TreeItem><DriveIcon />Lokaler Datenträger (D:)</TreeItem>
              <TreeItem $selected><DriveIcon />2TB SSD GAMES (E:)</TreeItem>
              <TreeItem><DriveIcon />leer (S:)</TreeItem>
              <TreeItem $root><NetworkIcon />Netzwerk</TreeItem>
            </Tree>
            <FilePane>
              <FileRow>
                <svg width="12" height="14" viewBox="0 0 12 14"><rect x="0.500" y="0.500" width="11" height="13" fill="#fff" stroke="#888" /></svg>
                <FileName>Qt5Xml.dll</FileName>
                <span>25.11.2020 18:55</span>
                <span>Anwendungserweit...</span>
                <Chevron d="M1 3L4 6L7 3" />
              </FileRow>
              <ScrollBar>
                <ScrollArrow aria-label="Nach links"><Chevron d="M6 1L2 4.500L6 8" /></ScrollArrow>
                <ScrollThumb />
                <Filler />
                <ScrollArrow aria-label="Nach rechts"><Chevron d="M2 1L6 4.500L2 8" /></ScrollArrow>
              </ScrollBar>
            </FilePane>
          </ExplorerBody>
          <StatusBar>
            <StatusText $width={75}>91 Elemente</StatusText>
            <StatusText $width={179}>1 Element ausgewählt (2,99 MB)</StatusText>
            <Spacer />
            <ViewButton $active aria-label="Details">
              <svg width="16" height="14" viewBox="0 0 16 14">
                <path d="M0.500 0.500H4.500V12.500H0.500ZM0.500 4.500H4.500M0.500 8.500H4.500" fill="#fff" stroke="#8b8b8b" />
                <path d="M6 2.500H10M12 2.500H16M6 6.500H10M12 6.500H16M6 10.500H10M12 10.500H16" stroke="#555" />
              </svg>
            </ViewButton>
            <ViewButton aria-label="Miniaturansichten">
              <svg width="14" height="11" viewBox="0 0 14 11">
                <rect x="0.500" y="0.500" width="13" height="10" fill="#fff" stroke="#8b8b8b" />
                <rect x="2" y="2" width="10" height="7" fill="#58aee8" />
                <path d="M2 5L7 7L12 6V9H2Z" fill="#27485c" />
              </svg>
            </ViewButton>
          </StatusBar>
        </ExplorerWindow>

        <TaskWindow>
          <TitleBar>
            <TaskIcon />
            <span>Task-Manager</span>
            <Spacer />
            <CaptionButton aria-label="Minimieren">
              <svg width="10" height="10"><path d="M0 4.500H10" stroke="#999" /></svg>
            </CaptionButton>
            <CaptionButton aria-label="Maximieren">
              <svg width="10" height="10"><rect x="0.500" y="0.500" width="9" height="9" fill="none" stroke="#999" /></svg>
            </CaptionButton>
            <CaptionButton aria-label="Schließen">
              <svg width="10" height="10"><path d="M0 0L10 10M10 0L0 10" stroke="#999" /></svg>
            </CaptionButton>
          </TitleBar>
          <MenuBar>
            <button>Datei</button>
            <button>Optionen</button>
            <button>Ansicht</button>
          </MenuBar>
          <TabStrip role="tablist">
            {tabs.map((t) => (
              <Tab key={t.label} role="tab" aria-selected={!!t.active} $active={t.active} $width={t.width}>
                {t.active ? <FocusFrame>{t.label}</FocusFrame> : t.label}
              </Tab>
            ))}
          </TabStrip>
          <TaskBody>
            <Sidebar>
              {resources.map((r, i) => (
                <Resource key={i} $selected={r.selected}>
                  <Dot $tone={r.tone} />
                  <ResourceText>
                    <ResourceName>{r.name}</ResourceName>
                    {r.lines.map((l, j) => <span key={j}>{l}</span>)}
                  </ResourceText>
                </Resource>
              ))}
            </Sidebar>
            <Performance>
              <Heading>
                <Title>CPU</Title>
                <Model>AMD Ryzen 9 5900X 12-Core Processor</Model>
              </Heading>
              <GraphLabels>
                <span>Auslastung in 60 Sekunden (%)</span>
                <span>100%</span>
              </GraphLabels>
              <Cores>
                {cores.map((c, i) => <CoreGraph key={i} {...c} />)}
              </Cores>
              <Stats>
                <StatRows>
                  <StatRow>
                    <Stat $width={79}><Muted>Auslastung</Muted><StatValue>30%</StatValue></Stat>
                    <Stat><Muted>Geschwindigkeit</Muted><StatValue>4,50 GHz</StatValue></Stat>
                  </StatRow>
                  <StatRow>
                    <Stat $width={65}><Muted>Prozesse</Muted><StatValue>269</StatValue></Stat>
                    <Stat $width={64}><Muted>Threads</Muted><StatValue>4981</StatValue></Stat>
                    <Stat><Muted>Handles</Muted><StatValue>129657</StatValue></Stat>
                  </StatRow>
                  <StatRow>
                    <Stat><Muted>Betriebszeit</Muted><StatValue>0:08:34:52</StatValue></Stat>
                  </StatRow>
                </StatRows>
                <Facts>
                  <tbody>
                    {facts.map(([k, v]) => (
                      <tr key={k}><th scope="row">{k}</th><td>{v}</td></tr>
                    ))}
                  </tbody>
                </Facts>
              </Stats>
            </Performance>
          </TaskBody>
          <TaskFooter>
            <LessButton>
              <svg width="19" height="19" viewBox="0 0 19 19">
                <circle cx="9.500" cy="9.500" r="9" fill="#fff" stroke="#8a8a8a" />
                <path d="M5 11.500L9.500 7L14 11.500" fill="none" stroke="#8a8a8a" strokeWidth="1.500" />
              </svg>
              <span><u>W</u>eniger Details</span>
            </LessButton>
            <Divider />
            <MonitorLink href="#">
              <svg width="16" height="16" viewBox="0 0 16 16">
                <circle cx="8" cy="8" r="7" fill="#f6f1e8" stroke="#858585" strokeWidth="2" />
                <path d="M4 11A5 5 0 1 1 12 11" fill="none" stroke="#cbb792" />
                <path d="M5 4L10 10L8.500 11Z" fill="#7a3c12" stroke="#7a3c12" />
              </svg>
              Ressourcenmonitor öffnen
            </MonitorLink>
          </TaskFooter>
        </TaskWindow>

        <MonitorWindow>
          <MonitorTitle>
            <span>MSI Afterburner v4.6.3 Beta 2 Hardware Monitor</span>
            <MonitorClose aria-label="Schließen">
              <svg width="5" height="5"><path d="M0 0L5 5M5 0L0 5" stroke="#fff" /></svg>
            </MonitorClose>
          </MonitorTitle>
          <MonitorGrid>
            {series.map((s) => <MonitorChart key={s.name} s={s} />)}
          </MonitorGrid>
        </MonitorWindow>
      </Desktop>
    </>
  );
}
